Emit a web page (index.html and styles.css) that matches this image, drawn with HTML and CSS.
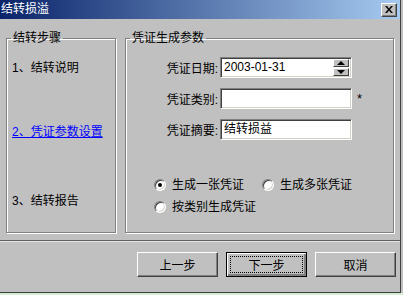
FILE: index.html
```html
<!DOCTYPE html>
<html lang="zh-CN">
<head>
    <meta charset="UTF-8">
    <title>结转损溢</title>
    <link rel="stylesheet" href="styles.css">
</head>
<body>
    <div class="window">
        <div class="titlebar">
            <span class="title">结转损溢</span>
            <span class="close">
                <svg width="8" height="7" viewBox="0 0 8 7">
                    <path d="M0 0h2l2 2.5L6 0h2L5 3.5 8 7H6L4 4.5 2 7H0l3-3.5z" fill="#000"/>
                </svg>
            </span>
        </div>

        <div class="content">
            <fieldset class="group steps">
                <legend>结转步骤</legend>
                <div class="step step-1">1、结转说明</div>
                <a class="step step-2" href="#">2、凭证参数设置</a>
                <div class="step step-3">3、结转报告</div>
            </fieldset>

            <fieldset class="group params">
                <legend>凭证生成参数</legend>
                <div class="form">
                    <label class="label">凭证日期:</label>
                    <div class="field">
                        <span class="value">2003-01-31</span>
                        <span class="spin">
                            <span class="spin-btn"><span class="arrow up"></span></span>
                            <span class="spin-btn"><span class="arrow down"></span></span>
                        </span>
                    </div>
                    <span></span>

                    <label class="label">凭证类别:</label>
                    <div class="field"></div>
                    <span class="required">*</span>

                    <label class="label">凭证摘要:</label>
                    <div class="field"><span class="value">结转损益</span></div>
                    <span></span>
                </div>

                <div class="radios">
                    <div class="radio-row">
                        <span class="radio-item"><span class="radio checked"></span>生成一张凭证</span>
                        <span class="radio-item second"><span class="radio"></span>生成多张凭证</span>
                    </div>
                    <div class="radio-row">
                        <span class="radio-item"><span class="radio"></span>按类别生成凭证</span>
                    </div>
                </div>
            </fieldset>
        </div>

        <div class="buttons">
            <button class="btn">上一步</button>
            <button class="btn default"><span class="focus">下一步</span></button>
            <button class="btn">取消</button>
        </div>
    </div>
    <div class="strip"></div>
</body>
</html>
```

FILE: styles.css
```css
* {
    box-sizing: border-box;
}

body {
    margin: 0;
    width: 403px;
    height: 295px;
    overflow: hidden;
    background-color: #c0c0c0;
    font-family: "Liberation Sans", "Noto Sans CJK SC", sans-serif;
    font-size: 12px;
    color: #000;
}

.window {
    width: 401px;
    height: 293px;
    border-right: 1px solid #404040;
    border-bottom: 1px solid #404040;
    background-color: #c0c0c0;
}

.titlebar {
    height: 19px;
    display: flex;
    align-items: center;
    justify-content: space-between;
    padding: 0 3px 0 1px;
    background: linear-gradient(to right, #0a246a, #a6caf0);
}

.title {
    color: #fff;
    font-size: 12px;
    line-height: 19px;
}

.close {
    width: 16px;
    height: 14px;
    display: flex;
    align-items: center;
    justify-content: center;
    background-color: #c0c0c0;
    border: 1px solid;
    border-color: #fff #404040 #404040 #fff;
    box-shadow: inset -1px -1px 0 #808080;
}

.content {
    display: flex;
    gap: 9px;
    height: 221px;
    padding: 11px 0 0 6px;
}

.group {
    margin: 0;
    padding: 0;
    height: 203px;
    border: 1px solid #808080;
    box-shadow: inset 1px 1px 0 #fff, 1px 1px 0 #fff;
}

.group legend {
    margin-left: 4px;
    padding: 0 2px;
    line-height: 16px;
}

.steps {
    width: 110px;
    display: flex;
    flex-direction: column;
}

.step {
    padding-left: 5px;
    line-height: 16px;
}

.step-1 {
    margin-top: 14px;
}

.step-2 {
    margin-top: 48px;
    color: #0000ff;
}

.step-3 {
    margin-top: 53px;
}

.params {
    width: 269px;
}

.form {
    display: grid;
    grid-template-columns: 92px 132px auto;
    column-gap: 2px;
    row-gap: 10px;
    align-items: center;
    padding-top: 11px;
}

.label {
    text-align: right;
}

.field {
    height: 21px;
    display: flex;
    align-items: center;
    justify-content: space-between;
    background-color: #fff;
    border: 1px solid;
    border-color: #808080 #fff #fff #808080;
    box-shadow: inset 1px 1px 0 #404040, inset -1px -1px 0 #d4d0c8;
    padding: 2px;
}

.value {
    padding-left: 1px;
    line-height: 15px;
}

.spin {
    display: flex;
    flex-direction: column;
    height: 17px;
}

.spin-btn {
    width: 16px;
    height: 8px;
    display: flex;
    align-items: center;
    justify-content: center;
    background-color: #c0c0c0;
    border: 1px solid;
    border-color: #fff #404040 #404040 #fff;
}

.spin-btn + .spin-btn {
    margin-top: 1px;
}

.arrow {
    width: 0;
    height: 0;
    border-left: 4px solid transparent;
    border-right: 4px solid transparent;
}

.arrow.up {
    border-bottom: 4px solid #000;
}

.arrow.down {
    border-top: 4px solid #000;
}

.required {
    padding-left: 3px;
    font-size: 13px;
    line-height: 13px;
}

.radios {
    display: flex;
    flex-direction: column;
    gap: 6px;
    margin-top: 37px;
    padding-left: 28px;
}

.radio-row {
    display: flex;
    line-height: 16px;
}

.radio-item {
    display: flex;
    align-items: center;
}

.radio-item.second {
    margin-left: 18px;
}

.radio {
    position: relative;
    width: 12px;
    height: 12px;
    margin-right: 6px;
    border-radius: 50%;
    background-color: #fff;
    border: 1px solid;
    border-color: #808080 #fff #fff #808080;
    box-shadow: inset 1px 1px 0 #404040, inset -1px -1px 0 #d4d0c8;
}

.radio.checked::after {
    content: "";
    position: absolute;
    left: 3px;
    top: 3px;
    width: 4px;
    height: 4px;
    border-radius: 50%;
    background-color: #000;
}

.buttons {
    display: flex;
    justify-content: flex-end;
    gap: 8px;
    height: 53px;
    padding: 11px 4px 0 0;
    border-top: 1px solid #606060;
    box-shadow: inset 0 1px 0 #e4e4e4;
}

.btn {
    width: 81px;
    height: 25px;
    padding: 0;
    font-family: inherit;
    font-size: 12px;
    color: #000;
    background-color: #c0c0c0;
    border: 1px solid;
    border-color: #fff #404040 #404040 #fff;
    box-shadow: inset -1px -1px 0 #808080;
}

.btn.default {
    display: flex;
    align-items: center;
    justify-content: center;
    padding: 3px;
    border: 1px solid #000;
    box-shadow: inset 1px 1px 0 #fff, inset -2px -2px 0 #808080;
}

.focus {
    width: 100%;
    height: 100%;
    display: flex;
    align-items: center;
    justify-content: center;
    border: 1px dotted #000;
}

.strip {
    height: 2px;
    background-color: #d4ecd4;
}
```
